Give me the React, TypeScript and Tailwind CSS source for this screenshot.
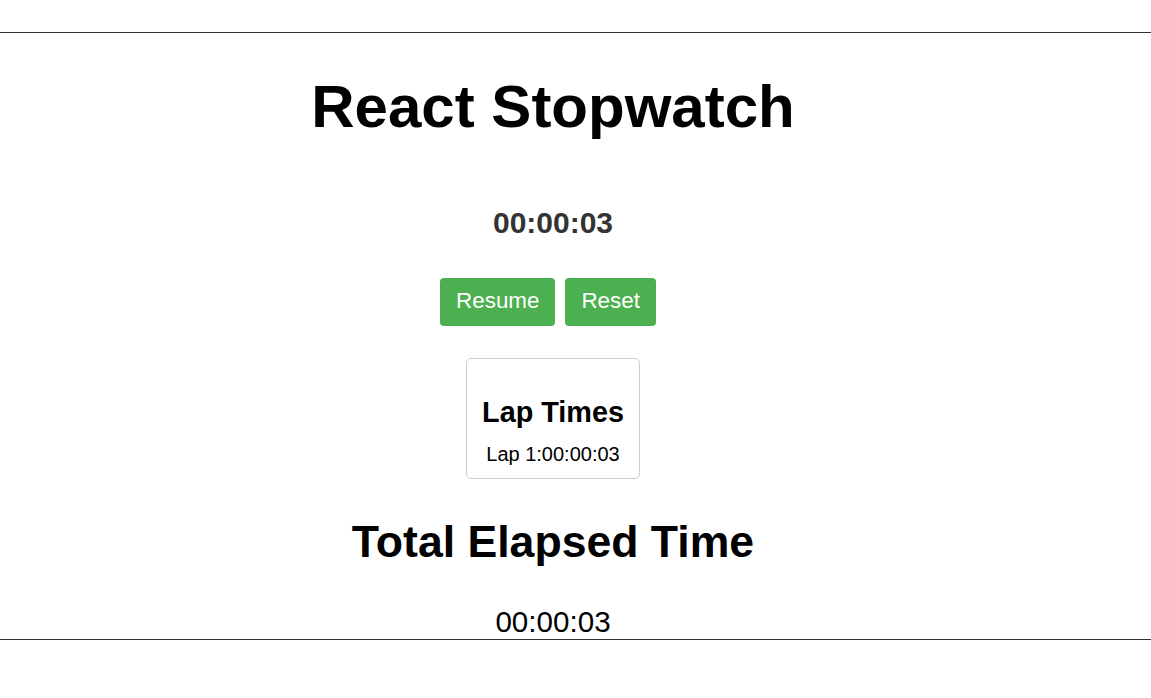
export default function App() {
  return (
    <div
      className="min-h-[698px] w-full bg-white text-black"
      style={{ fontFamily: '"Liberation Sans", Arial, sans-serif' }}
    >
      <div className="h-[32px]" />
      <div className="h-px w-full bg-[#333]" />
      <div className="flex w-[1106px] flex-col items-center">
        <h1 className="mt-[40px] text-[60px] font-bold leading-[68px]">React Stopwatch</h1>
        <div className="mt-[64px] text-[30px] font-bold leading-[35px] text-[#333]">00:00:03</div>
        <div className="mt-[38px] flex">
          <button className="mr-[10px] rounded-[4px] bg-[#4CAF50] px-4 pt-[11px] pb-[13px] text-[22.4px] leading-[24px] text-white">
            Resume
          </button>
          <button className="mr-[10px] rounded-[4px] bg-[#4CAF50] px-4 pt-[11px] pb-[13px] text-[22.4px] leading-[24px] text-white">
            Reset
          </button>
        </div>
        <div className="mt-[32px] flex flex-col items-center rounded-[5px] border border-[#ccc] px-[15px] pt-[37px] pb-[12px]">
          <h2 className="text-[28.8px] font-bold leading-[33px]">Lap Times</h2>
          <div className="mt-[14px] text-[20px] leading-[23px]">Lap 1:00:00:03</div>
        </div>
        <h2 className="mt-[37px] text-[44.6px] font-bold leading-[51px]">Total Elapsed Time</h2>
        <div className="mt-[38px] text-[29.6px] leading-[33px]">00:00:03</div>
      </div>
      <div className="mt-px h-px w-full bg-[#333]" />
    </div>
  );
}
